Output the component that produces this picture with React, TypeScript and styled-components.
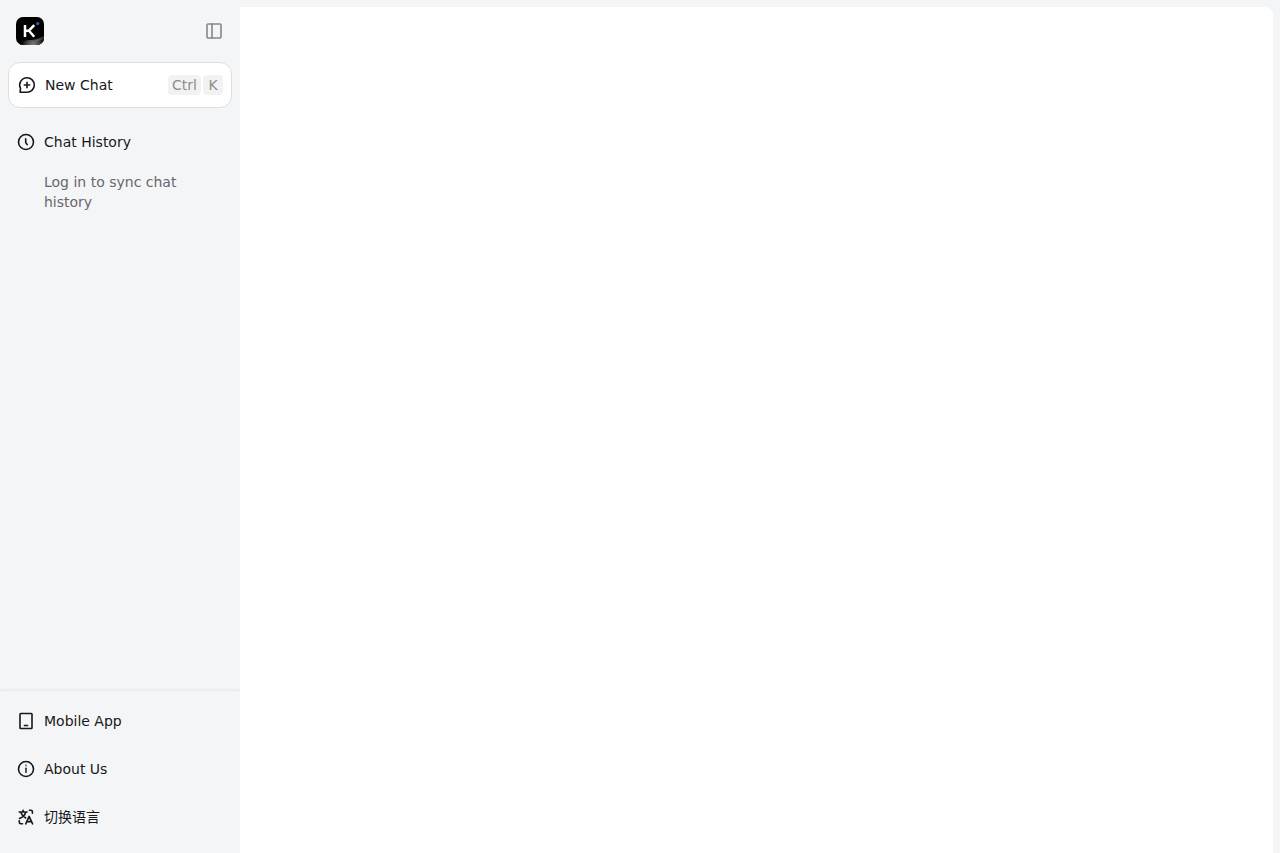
import React from "react";
import styled, { createGlobalStyle } from "styled-components";

const GlobalStyle = createGlobalStyle`
  *, *::before, *::after { box-sizing: border-box; }
  body {
    margin: 0;
    background: #f4f5f7;
    color: #17181a;
    font: 14px/20px "DejaVu Sans", "Noto Sans CJK SC", sans-serif;
  }
  button { font: inherit; color: inherit; cursor: pointer; }
`;

const Shell = styled.div`
  display: flex;
  min-height: 100vh;
`;

const Sidebar = styled.aside`
  display: flex;
  flex-direction: column;
  flex: 0 0 240px;
`;

const Header = styled.header`
  display: flex;
  align-items: center;
  justify-content: space-between;
  height: 62px;
  padding: 0 16px;
`;

const HomeLink = styled.a`
  display: flex;
`;

const ToggleButton = styled.button`
  display: flex;
  padding: 0;
  border: 0;
  background: none;
  color: #85878a;
`;

const NewChatButton = styled.button`
  display: flex;
  align-items: center;
  gap: 8px;
  height: 46px;
  margin: 0 8px;
  padding: 0 8px;
  border: 1px solid #dedfe1;
  border-radius: 12px;
  background: #fff;
`;

const Shortcut = styled.span`
  display: flex;
  gap: 2px;
  margin-left: auto;
`;

const Key = styled.kbd`
  min-width: 20px;
  padding: 0 4px;
  border-radius: 4px;
  background: #f2f2f2;
  color: #8c8c8c;
  font: inherit;
  text-align: center;
`;

const History = styled.section`
  flex: 1;
  padding: 14px 8px 0;
`;

const Item = styled.a`
  display: flex;
  align-items: center;
  gap: 8px;
  height: 40px;
  padding: 0 8px;
  border-radius: 8px;
  color: inherit;
  text-decoration: none;
`;

const Hint = styled.p`
  margin: 0;
  padding: 10px 32px 0 36px;
  color: #66686b;
`;

const Footer = styled.nav`
  display: flex;
  flex-direction: column;
  gap: 8px;
  padding: 10px 8px 16px;
  border-top: 1px solid #e9eaec;
  box-shadow: 0 -1px 2px rgba(0, 0, 0, 0.04);
`;

const Content = styled.main`
  flex: 1;
  margin: 7px 7px 0 0;
  border-radius: 0 8px 0 0;
  background: #fff;
`;

const Glyph = styled.svg.attrs({ viewBox: "0 0 20 20", "aria-hidden": true })`
  flex: none;
  width: 20px;
  height: 20px;
  fill: none;
  stroke: currentColor;
  stroke-width: 1.6;
  stroke-linecap: round;
  stroke-linejoin: round;
`;

const Logo = () => (
  <svg width="28" height="28" viewBox="0 0 28 28" role="img" aria-label="Kimi">
    <defs>
      <clipPath id="tile"><rect width="28" height="28" rx="7" /></clipPath>
      <radialGradient id="ground" cx="17" cy="28" r="12" gradientUnits="userSpaceOnUse">
        <stop offset="0" stopColor="#808080" />
        <stop offset="0.5" stopColor="#484848" />
        <stop offset="1" stopColor="#000" />
      </radialGradient>
    </defs>
    <g clipPath="url(#tile)">
      <rect width="28" height="28" fill="#000" />
      <path d="M3 28c3-4 7-5 11-5s8-1 14-5v10z" fill="url(#ground)" />
      <path d="M15 25c4-1 7-3 13-6v3c-5 2-8 3-13 4z" fill="#777" opacity=".4" />
    </g>
    <path d="M9 8v12M18.2 8.2l-5.2 5.5H9M13 13.7l5.2 6.1" fill="none" stroke="#fff" strokeWidth="2.5" strokeLinejoin="round" />
    <circle cx="21.8" cy="6.6" r="1.6" fill="#2c63b8" />
  </svg>
);

const PanelIcon = () => (
  <Glyph>
    <rect x="3" y="3" width="14" height="14" rx="1" />
    <path d="M8 3v14" />
  </Glyph>
);

const NewChatIcon = () => (
  <Glyph>
    <path d="M10 2.7a7.3 7.3 0 1 1 0 14.6H3.1l.4-4A7.3 7.3 0 0 1 10 2.7z" />
    <path d="M10 7.3v5.4M7.3 10h5.4" />
  </Glyph>
);

const ClockIcon = () => (
  <Glyph>
    <circle cx="10" cy="10" r="7.5" />
    <path d="M9.7 6.7v3.8l1.5 2.1" />
  </Glyph>
);

const PhoneIcon = () => (
  <Glyph>
    <rect x="4" y="2.5" width="12" height="15" rx=".7" />
    <path d="M8.4 14.5h3.2" />
  </Glyph>
);

const InfoIcon = () => (
  <Glyph>
    <circle cx="10" cy="10" r="7.5" />
    <path d="M10 9.2v4.2" strokeWidth="1.4" />
    <circle cx="10" cy="6.6" r=".2" />
  </Glyph>
);

const LanguageIcon = () => (
  <Glyph>
    <path d="M3.2 5h7.8M7.1 3.2v1.8M9.7 5.2c-.8 3-2.8 5-6.2 6.2M4.7 5.2c1 2.8 2.6 4.6 5 5.8" />
    <path d="M9.8 16.8l3.3-7.4 3.5 7.4M11 14.6h4.4M13.4 3.2h1.5c1 0 1.5.5 1.5 1.5v1.5M3.3 13.8v1.5c0 1 .5 1.5 1.5 1.5h1.7" />
  </Glyph>
);

export default function App() {
  return (
    <>
      <GlobalStyle />
      <Shell>
        <Sidebar>
          <Header>
            <HomeLink href="#"><Logo /></HomeLink>
            <ToggleButton type="button" aria-label="Toggle sidebar"><PanelIcon /></ToggleButton>
          </Header>
          <NewChatButton type="button">
            <NewChatIcon />
            New Chat
            <Shortcut><Key>Ctrl</Key><Key>K</Key></Shortcut>
          </NewChatButton>
          <History>
            <Item href="#"><ClockIcon />Chat History</Item>
            <Hint>Log in to sync chat history</Hint>
          </History>
          <Footer>
            <Item href="#"><PhoneIcon />Mobile App</Item>
            <Item href="#"><InfoIcon />About Us</Item>
            <Item href="#" lang="zh-CN"><LanguageIcon />切换语言</Item>
          </Footer>
        </Sidebar>
        <Content />
      </Shell>
    </>
  );
}
